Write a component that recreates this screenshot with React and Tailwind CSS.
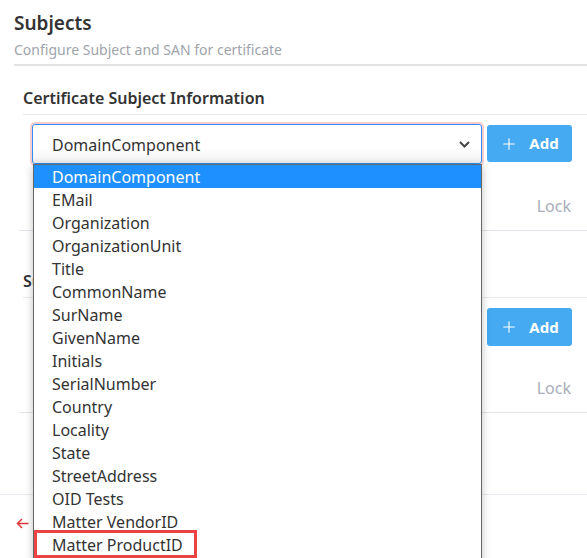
import React from "react";
import { Plus } from "lucide-react";

const items = [
  "DomainComponent",
  "EMail",
  "Organization",
  "OrganizationUnit",
  "Title",
  "CommonName",
  "SurName",
  "GivenName",
  "Initials",
  "SerialNumber",
  "Country",
  "Locality",
  "State",
  "StreetAddress",
  "OID Tests",
  "Matter VendorID",
  "Matter ProductID",
];

function AddButton({ className = "" }) {
  return (
    <button
      className={
        "flex h-[37px] w-[85px] shrink-0 items-center justify-center gap-[11px] rounded-[3px] bg-[#45aaf2] text-[15px] font-bold text-white " +
        className
      }
    >
      <Plus size={18} strokeWidth={1.5} />
      <span>Add</span>
    </button>
  );
}

export default function App() {
  return (
    <div className="relative h-[558px] w-[587px] overflow-hidden bg-white font-['Noto_Sans',sans-serif] text-[#333]">
      <div className="pl-[14px] pt-[10px]">
        <h2 className="text-[19px] font-semibold leading-[26px] text-[#333]">Subjects</h2>
        <p className="mt-[4px] text-[14px] leading-[20px] text-[#a0a4ab]">
          Configure Subject and SAN for certificate
        </p>
        <div className="mt-[4px] h-[2px] bg-[#e3e3e3]" />
      </div>

      <div className="pl-[23px]">
        <h3 className="mt-[21px] text-[16px] font-semibold leading-[22px] text-[#333]">
          Certificate Subject Information
        </h3>
        <div className="mt-[5px] h-px bg-[#e8e8e8]" />
        <div className="mt-[9px] flex items-start gap-[5px] pl-[9px]">
          <div className="flex h-[40px] w-[450px] items-center justify-between rounded-[3px] border border-[#2f8ef5] bg-gradient-to-b from-white from-60% to-[#f0f0f0] pl-[19px] pr-[11px] text-[16px] text-[#333] shadow-[0_0_0_2px_#f8cccc]">
            <span className="relative top-[1px]">DomainComponent</span>
            <svg width="11" height="7" viewBox="0 0 11 7" fill="none">
              <path d="M1 1l4.5 4.5L10 1" stroke="#444" strokeWidth="2" />
            </svg>
          </div>
          <AddButton className="mt-[1px]" />
        </div>
        <div className="mt-[30px] flex justify-end pr-[16px] text-[16px] leading-[24px] text-[#a9aeb8]">
          Lock
        </div>
      </div>
      <div className="ml-[19px] mt-[12px] h-px bg-[#e3e3ea]" />

      <div className="pl-[23px]">
        <h3 className="mt-[39px] text-[16px] font-semibold leading-[22px] text-[#333]">
          Subject Alternative Names
        </h3>
        <div className="mt-[5px] h-px bg-[#e8e8e8]" />
        <div className="mt-[10px] flex justify-end pr-[15px]">
          <AddButton className="h-[38px]" />
        </div>
        <div className="mt-[30px] flex justify-end pr-[16px] text-[16px] leading-[24px] text-[#a9aeb8]">
          Lock
        </div>
      </div>
      <div className="ml-[19px] mt-[12px] h-px bg-[#e3e3ea]" />

      <div className="mt-[81px] h-px bg-[#e8e8ee]" />
      <div className="pl-[16px] pt-[23px]">
        <svg width="13" height="11" viewBox="0 0 13 11" fill="none">
          <path d="M12.5 5.5H1.5M6 1L1.5 5.5L6 10" stroke="#dc3a3a" strokeWidth="1.5" />
        </svg>
      </div>

      <div className="absolute left-[33px] top-[164px] h-[400px] w-[449px] border border-[#666] bg-white shadow-[0_2px_8px_rgba(0,0,0,0.25)]">
        <div className="relative">
          {items.map((it, i) => (
            <div
              key={it}
              className={
                "h-[23px] pl-[18px] text-[16px] leading-[23px] " +
                (i === 0 ? "bg-[#1e90ff] text-white" : "text-[#333]")
              }
            >
              <span className="relative top-[1px]">{it}</span>
            </div>
          ))}
          <div className="absolute left-0 top-[365px] h-[28px] w-[163px] border-[3px] border-[#ea4343]" />
        </div>
      </div>
    </div>
  );
}
